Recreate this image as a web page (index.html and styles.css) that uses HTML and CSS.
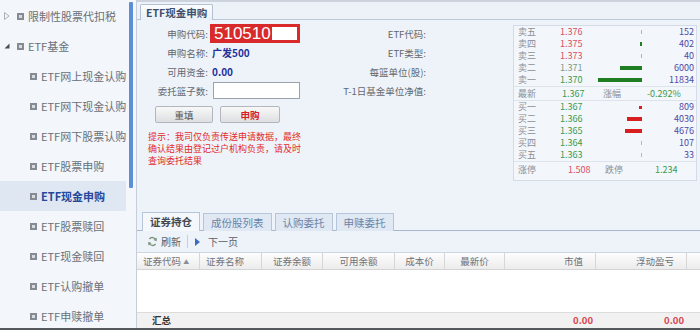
FILE: index.html
```html
<!DOCTYPE html>
<html lang="zh-CN">
<head>
  <meta charset="UTF-8" />
  <title>ETF现金申购</title>
  <link rel="stylesheet" href="styles.css">
</head>
<body>
  <div class="app">
    <!-- LEFT MENU -->
    <aside class="sidebar">
      <ul class="menu">
        <li class="menu-item top">
          <svg class="arrow" width="6" height="8" viewBox="0 0 6 8"><polygon points="0.5,0.5 5,4 0.5,7.5" fill="none" stroke="#aab0b8"/></svg>
          <span class="node"></span>限制性股票代扣税
        </li>
        <li class="menu-item top">
          <svg class="arrow" width="6" height="8" viewBox="0 0 6 8"><polygon points="5.5,1.5 5.5,6.5 0.5,6.5" fill="#4a4f57"/></svg>
          <span class="node"></span>ETF基金
        </li>
        <li class="menu-item child"><span class="node"></span>ETF网上现金认购</li>
        <li class="menu-item child"><span class="node"></span>ETF网下现金认购</li>
        <li class="menu-item child"><span class="node"></span>ETF网下股票认购</li>
        <li class="menu-item child"><span class="node"></span>ETF股票申购</li>
        <li class="menu-item child active"><span class="node"></span>ETF现金申购</li>
        <li class="menu-item child"><span class="node"></span>ETF股票赎回</li>
        <li class="menu-item child"><span class="node"></span>ETF现金赎回</li>
        <li class="menu-item child"><span class="node"></span>ETF认购撤单</li>
        <li class="menu-item child"><span class="node"></span>ETF申赎撤单</li>
      </ul>
    </aside>
    <div class="scrollbar"><div class="thumb"></div></div>

    <!-- MAIN PANEL -->
    <main class="main">
      <div class="page-tabs">
        <span class="page-tab">ETF现金申购</span>
      </div>

      <div class="form-area">
        <!-- order form -->
        <div class="form-left">
          <div class="form-row">
            <label>申购代码:</label>
            <div class="code-box"><span>510510</span></div>
          </div>
          <div class="form-row">
            <label>申购名称:</label>
            <span class="value">广发500</span>
          </div>
          <div class="form-row">
            <label>可用资金:</label>
            <span class="value">0.00</span>
          </div>
          <div class="form-row">
            <label>委托篮子数:</label>
            <input class="basket-input" type="text" />
          </div>
          <div class="btn-row">
            <button class="btn">重填</button>
            <button class="btn btn-submit">申购</button>
          </div>
          <p class="hint">提示：我司仅负责传送申请数据，最终<br>确认结果由登记过户机构负责，请及时<br>查询委托结果</p>
        </div>

        <!-- fund info -->
        <div class="form-mid">
          <div class="form-row"><label>ETF代码:</label></div>
          <div class="form-row"><label>ETF类型:</label></div>
          <div class="form-row"><label>每篮单位(股):</label></div>
          <div class="form-row"><label>T-1日基金单位净值:</label></div>
        </div>

        <!-- five level quote -->
        <div class="quote">
          <div class="q-row"><span class="q-label">卖五</span><span class="q-price up">1.376</span><span class="q-bar-cell"><i class="bar tick-sell" style="width:1px"></i></span><span class="q-vol">152</span></div>
          <div class="q-row"><span class="q-label">卖四</span><span class="q-price up">1.375</span><span class="q-bar-cell"><i class="bar sell" style="width:2px"></i></span><span class="q-vol">402</span></div>
          <div class="q-row"><span class="q-label">卖三</span><span class="q-price up">1.373</span><span class="q-bar-cell"><i class="bar tick-sell" style="width:1px"></i></span><span class="q-vol">40</span></div>
          <div class="q-row"><span class="q-label">卖二</span><span class="q-price flat">1.371</span><span class="q-bar-cell"><i class="bar sell" style="width:22px"></i></span><span class="q-vol">6000</span></div>
          <div class="q-row"><span class="q-label">卖一</span><span class="q-price down">1.370</span><span class="q-bar-cell"><i class="bar sell" style="width:44px"></i></span><span class="q-vol">11834</span></div>

          <div class="q-row q-last">
            <span class="q-label">最新</span><span class="q-cell down">1.367</span><span class="q-cell2">涨幅</span><span class="down">-0.292%</span>
          </div>

          <div class="q-row"><span class="q-label">买一</span><span class="q-price down">1.367</span><span class="q-bar-cell"><i class="bar buy dot" style="width:3px"></i></span><span class="q-vol">809</span></div>
          <div class="q-row"><span class="q-label">买二</span><span class="q-price down">1.366</span><span class="q-bar-cell"><i class="bar buy" style="width:15px"></i></span><span class="q-vol">4030</span></div>
          <div class="q-row"><span class="q-label">买三</span><span class="q-price down">1.365</span><span class="q-bar-cell"><i class="bar buy" style="width:17px"></i></span><span class="q-vol">4676</span></div>
          <div class="q-row"><span class="q-label">买四</span><span class="q-price down">1.364</span><span class="q-bar-cell"><i class="bar tick-buy" style="width:1px"></i></span><span class="q-vol">107</span></div>
          <div class="q-row"><span class="q-label">买五</span><span class="q-price down">1.363</span><span class="q-bar-cell"><i class="bar tick-buy" style="width:1px"></i></span><span class="q-vol">33</span></div>

          <div class="q-row q-limit">
            <span class="q-label">涨停</span><span class="q-cell3 up">1.508</span><span class="q-cell4">跌停</span><span class="down">1.234</span>
          </div>
        </div>
      </div>

      <!-- BOTTOM TABS -->
      <div class="sub-tabs">
        <span class="sub-tab active">证券持仓</span>
        <span class="sub-tab">成份股列表</span>
        <span class="sub-tab">认购委托</span>
        <span class="sub-tab">申赎委托</span>
      </div>

      <div class="toolbar">
        <span class="tool">
          <svg width="11" height="11" viewBox="0 0 11 11">
            <path d="M8.8 4.2A3.6 3.6 0 0 0 2.4 3" fill="none" stroke="#7d957d" stroke-width="1.3"/>
            <polygon points="9.8,1.6 9.6,5.2 6.4,4" fill="#7d957d"/>
            <path d="M2.2 6.8A3.6 3.6 0 0 0 8.6 8" fill="none" stroke="#7d957d" stroke-width="1.3"/>
            <polygon points="1.2,9.4 1.4,5.8 4.6,7" fill="#7d957d"/>
          </svg>
          刷新
        </span>
        <span class="tool-sep"></span>
        <span class="tool"><i class="play"></i>下一页</span>
      </div>

      <div class="grid-head">
        <span class="c-left">证券代码 <i class="sort">▲</i></span>
        <span class="c-left2">证券名称</span>
        <span class="c-center">证券余额</span>
        <span class="c-center">可用余额</span>
        <span class="c-center">成本价</span>
        <span class="c-center">最新价</span>
        <span class="c-right">市值</span>
        <span class="c-right">浮动盈亏</span>
        <span></span>
      </div>
      <div class="grid-body"></div>
      <div class="grid-foot">
        <span class="sum-label">汇总</span>
        <span></span>
        <span></span>
        <span></span>
        <span></span>
        <span></span>
        <span class="sum-val">0.00</span>
        <span class="sum-val">0.00</span>
        <span></span>
      </div>
    </main>
  </div>
</body>
</html>
```

FILE: styles.css
```css
/* ---------------------------------------------
   GENERAL / RESET
--------------------------------------------- */
* {
  margin: 0;
  padding: 0;
  box-sizing: border-box;
  font-family: "Noto Sans CJK SC", "Liberation Sans", sans-serif;
}

body {
  width: 700px;
  height: 330px;
  overflow: hidden;
  background: #eef3f9;
}

.app {
  display: flex;
  height: 330px;
  border-bottom: 2px solid #55595e;
}

/* ---------------------------------------------
   LEFT MENU
--------------------------------------------- */
.sidebar {
  width: 128px;
  background: #f3f6fa;
}
.menu {
  list-style: none;
  padding-top: 1px;
}
.menu-item {
  height: 30px;
  display: flex;
  align-items: center;
  font-size: 11px;
  color: #6a7078;
  white-space: nowrap;
}
.menu-item.top {
  padding-left: 4px;
}
.menu-item.top .arrow {
  width: 6px;
  margin-right: 7px;
}
.menu-item.child {
  padding-left: 30px;
}
.node {
  display: inline-block;
  width: 7px;
  height: 7px;
  border: 2px solid #868b93;
  background: #d7dbe0;
  margin-right: 4px;
}
.menu-item.active {
  background: #dfe7f3;
  color: #26479a;
  font-weight: bold;
  margin-right: 2px;
}

.scrollbar {
  width: 8px;
  background: #f3f6fa;
}
.thumb {
  width: 4px;
  height: 186px;
  margin: 2px 0 0 1px;
  background: #5d8fd6;
  border-radius: 1px;
}

/* ---------------------------------------------
   MAIN PANEL
--------------------------------------------- */
.main {
  flex: 1;
  display: flex;
  flex-direction: column;
  border-left: 1px solid #c6ced9;
  background: #eef3f9;
  min-width: 0;
}

.page-tabs {
  height: 20px;
  display: flex;
  align-items: flex-end;
  padding-left: 3px;
  border-top: 2px solid #ccd3dc;
  border-bottom: 1px solid #bcc8d7;
  background: #edf2f9;
}
.page-tab {
  height: 16px;
  line-height: 15px;
  padding: 0 5px;
  margin-bottom: -1px;
  border: 1px solid #b3c1d3;
  border-bottom: none;
  border-radius: 2px 2px 0 0;
  background: linear-gradient(#fbfcfe, #eaf0f7);
  font-size: 10.5px;
  font-weight: bold;
  color: #3d4f6e;
}

/* form */
.form-area {
  height: 190px;
  display: flex;
  padding-top: 4px;
}
.form-left {
  width: 170px;
}
.form-row {
  height: 19px;
  display: flex;
  align-items: center;
}
.form-row label {
  width: 73px;
  padding-right: 2px;
  text-align: right;
  font-size: 9.5px;
  color: #62676e;
  white-space: nowrap;
}
.code-box {
  width: 90px;
  height: 19px;
  border: 3px solid #d82a2a;
  background: #fff;
  display: flex;
  align-items: center;
}
.code-box span {
  background: #d82a2a;
  color: #fff;
  font-family: "Liberation Sans", sans-serif;
  font-size: 17px;
  line-height: 13px;
  padding: 0 1px 0 1px;
}
.value {
  font-size: 10px;
  font-weight: bold;
  color: #23309a;
  padding-left: 2px;
}
.basket-input {
  width: 87px;
  height: 17px;
  margin-left: 3px;
  border: 1px solid #9aa3ad;
  background: #fff;
}

.btn-row {
  display: flex;
  gap: 7px;
  margin-top: 6px;
  padding-left: 18px;
}
.btn {
  width: 58px;
  height: 17px;
  border: 1px solid #b3b7bd;
  border-radius: 2px;
  background: linear-gradient(#f8f8f8, #dedfe1);
  font-size: 9.5px;
  color: #555;
}
.btn-submit {
  width: 60px;
  color: #d42020;
  font-weight: bold;
}

.hint {
  margin-top: 8px;
  padding-left: 11px;
  font-size: 9px;
  line-height: 12px;
  color: #e22b2b;
  white-space: nowrap;
}

.form-mid {
  width: 119px;
}
.form-mid .form-row label {
  width: 100%;
  padding-right: 0;
}

/* ---------------------------------------------
   QUOTE BOX
--------------------------------------------- */
.quote {
  width: 184px;
  height: 156px;
  margin: 1px 3px 0 auto;
  border: 1px solid #d3dbe6;
  background: #f3f6fb;
  font-size: 9px;
}
.q-row {
  height: 12px;
  display: flex;
  align-items: center;
  line-height: 12px;
}
.q-label {
  width: 46px;
  padding-left: 4px;
  color: #8a8f96;
}
.q-price {
  width: 36px;
}
.q-bar-cell {
  width: 46px;
  height: 12px;
  display: flex;
  justify-content: flex-end;
  align-items: center;
}
.q-vol {
  flex: 1;
  text-align: right;
  padding-right: 2px;
  color: #4b4ba8;
}
.bar {
  display: block;
  height: 4px;
}
.bar.sell { background: #1f7d22; }
.bar.buy { background: #d81e1e; }
.bar.dot { height: 3px; }
.bar.tick-sell { background: #a9b8a9; }
.bar.tick-buy { background: #e3a7a7; }

.up { color: #d8505f; }
.down { color: #3b9a4b; }
.flat { color: #7c9a82; }

.q-last {
  height: 15px;
  border-top: 1px solid #dde3ea;
  border-bottom: 1px solid #dde3ea;
}
.q-cell {
  width: 43px;
  padding-left: 2px;
}
.q-cell2 {
  width: 44px;
  color: #8a8f96;
}
.q-limit {
  height: 17px;
  border-top: 1px solid #dde3ea;
}
.q-cell3 {
  width: 45px;
  padding-left: 8px;
}
.q-cell4 {
  width: 50px;
  color: #8a8f96;
}

/* ---------------------------------------------
   BOTTOM TABS + GRID
--------------------------------------------- */
.sub-tabs {
  height: 21px;
  display: flex;
  align-items: flex-end;
  gap: 3px;
  padding-left: 5px;
  border-bottom: 1px solid #a9b9cc;
}
.sub-tab {
  height: 18px;
  line-height: 17px;
  padding: 0 7px;
  margin-bottom: -1px;
  border: 1px solid #b6c6da;
  border-bottom: none;
  background: #dfe8f3;
  font-size: 10.5px;
  color: #6a84a8;
}
.sub-tab.active {
  background: #f4f7fb;
  color: #444a52;
  font-weight: bold;
  height: 19px;
}

.toolbar {
  height: 21px;
  display: flex;
  align-items: center;
  padding-left: 10px;
  background: #eef3f9;
  font-size: 10px;
  color: #5a6068;
}
.tool {
  display: flex;
  align-items: center;
  gap: 3px;
}
.tool-sep {
  width: 1px;
  height: 13px;
  background: #c7cfd9;
  margin: 0 7px 0 6px;
}
.play {
  display: inline-block;
  width: 0;
  height: 0;
  border-top: 4px solid transparent;
  border-bottom: 4px solid transparent;
  border-left: 5px solid #3b6cc2;
  margin-right: 5px;
}

.grid-head,
.grid-foot {
  display: grid;
  grid-template-columns: 63px 62px 61px 72px 50px 60px 91px 91px 1fr;
}
.grid-head {
  height: 18px;
  background: linear-gradient(#fdfdfd, #ececec);
  border-top: 1px solid #cfd6df;
  border-bottom: 1px solid #d3d3d3;
  font-size: 9.5px;
  color: #6e737a;
}
.grid-head span {
  line-height: 16px;
  border-right: 1px solid #d6d6d6;
  white-space: nowrap;
}
.grid-head span:last-child {
  border-right: none;
}
.c-left { padding-left: 6px; }
.c-left2 { padding-left: 6px; }
.c-center { text-align: center; }
.c-right { text-align: right; padding-right: 12px; }
.sort {
  font-style: normal;
  font-size: 6px;
  color: #8a8f96;
  vertical-align: 1px;
}

.grid-body {
  flex: 1;
  background: #fff;
}

.grid-foot {
  height: 16px;
  background: #f1f1f1;
  border-top: 1px solid #dcdcdc;
  font-size: 9.5px;
  line-height: 15px;
}
.sum-label {
  padding-left: 15px;
  font-weight: bold;
  color: #333;
}
.sum-val {
  text-align: right;
  padding-right: 3px;
  font-weight: bold;
  color: #d9434f;
}
```
